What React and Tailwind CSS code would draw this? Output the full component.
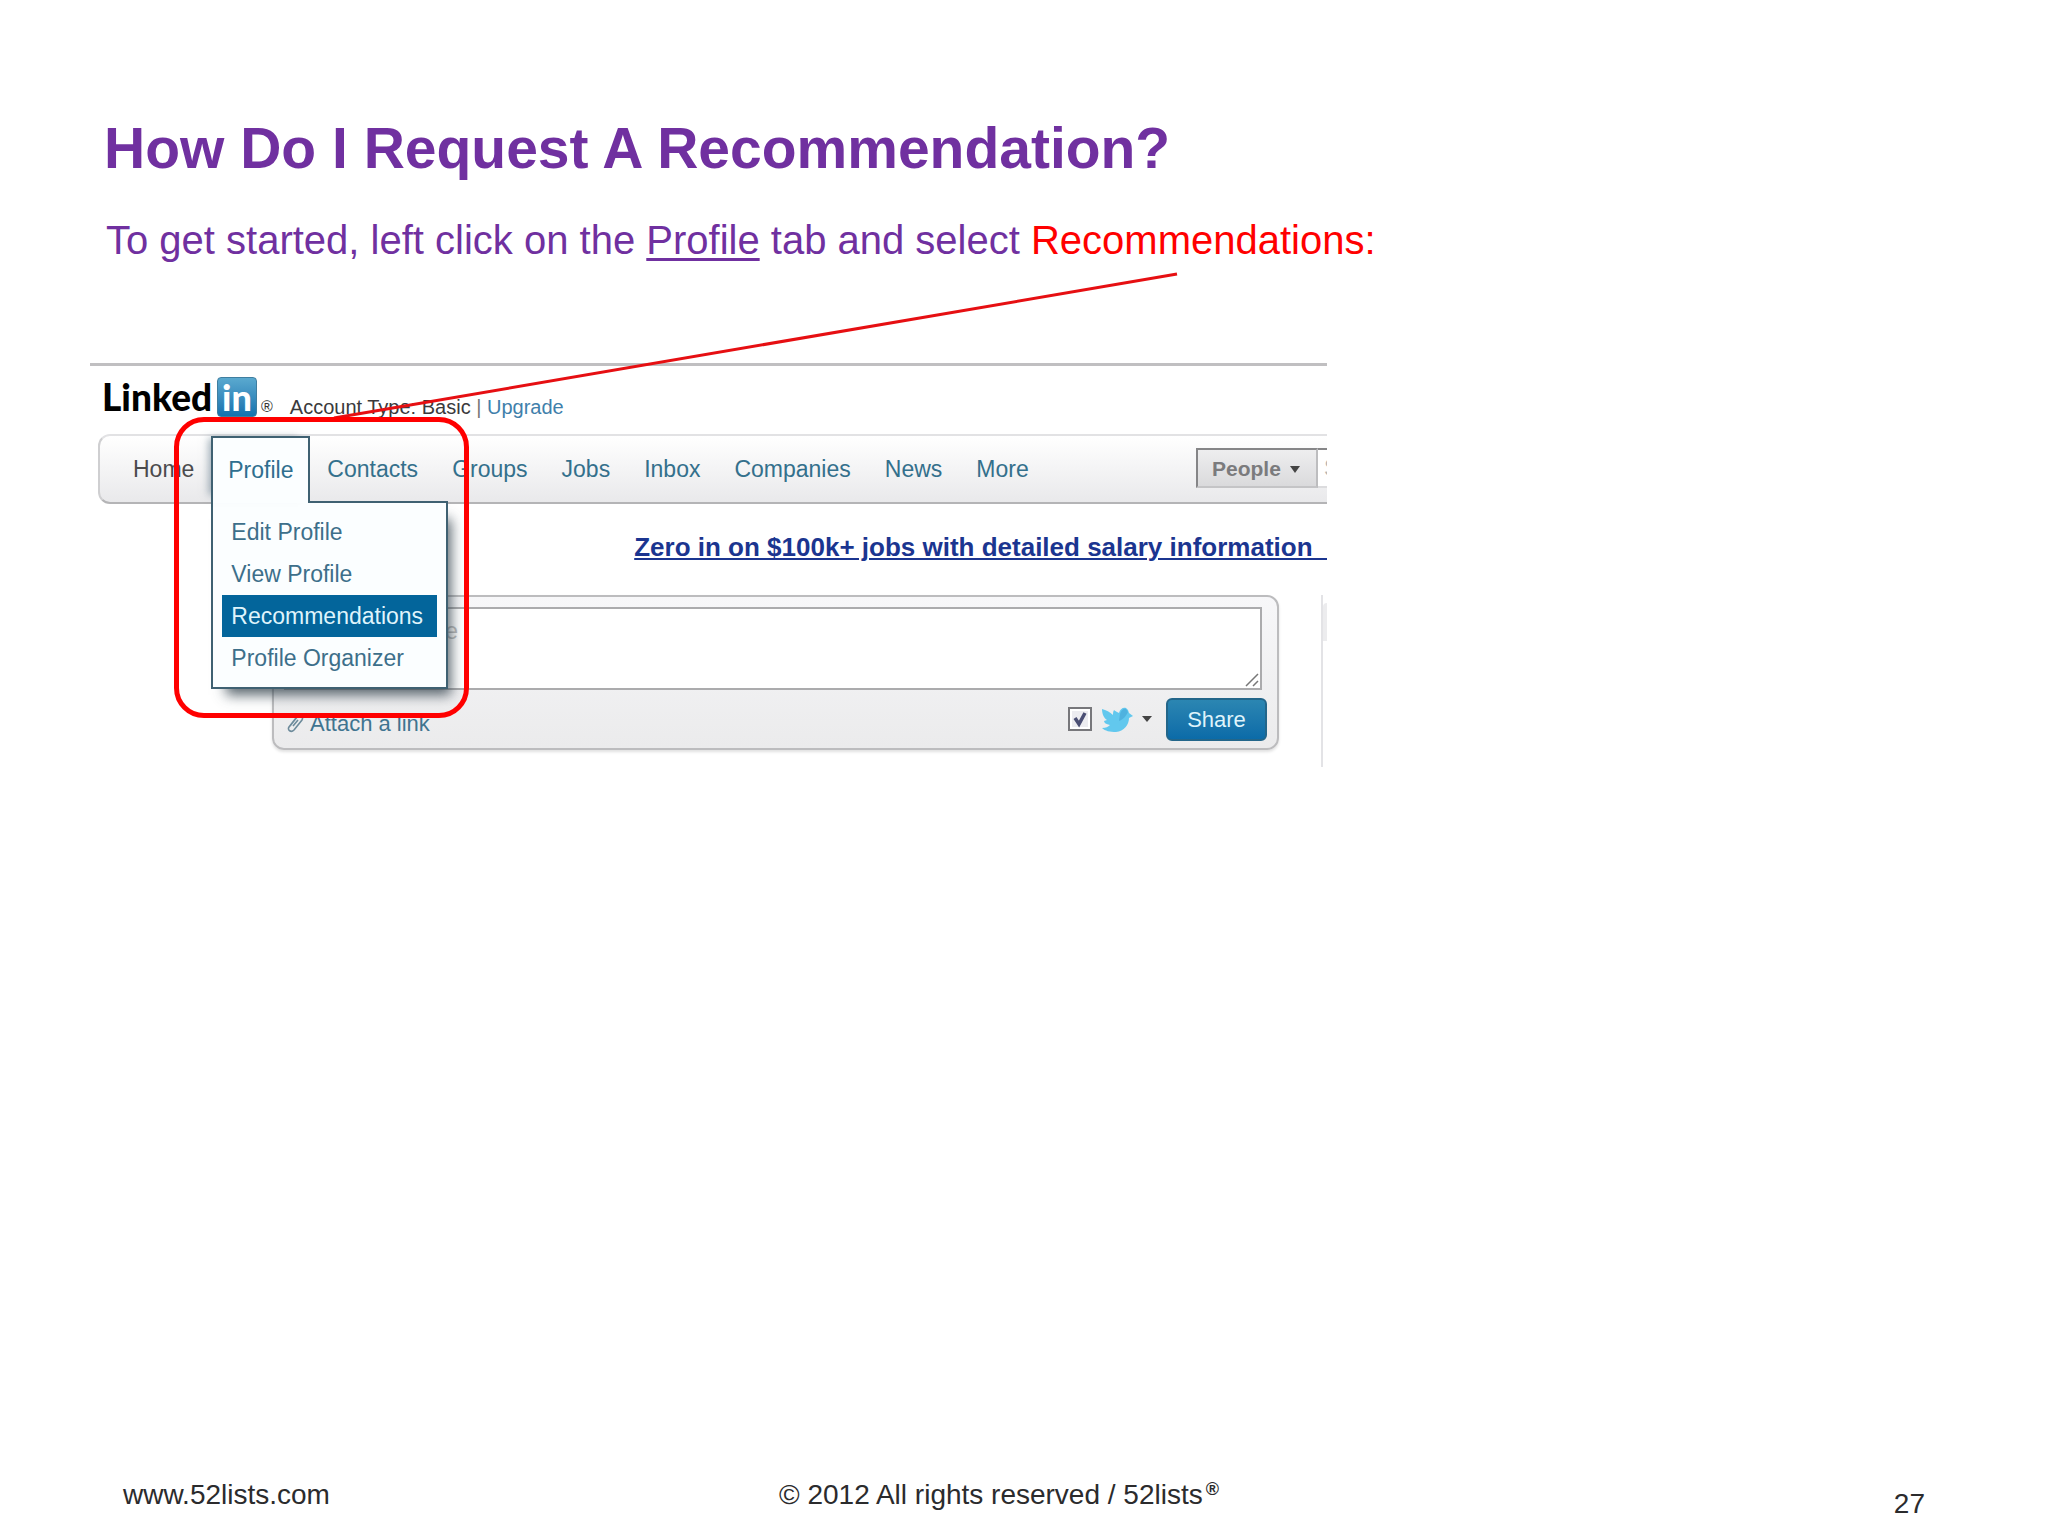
import React from "react";

const navItems = ["Contacts", "Groups", "Jobs", "Inbox", "Companies", "News", "More"];
const menuItems = ["Edit Profile", "View Profile", "Recommendations", "Profile Organizer"];

function Logo() {
  return (
    <a href="#home" aria-label="LinkedIn" className="flex items-end text-black">
      <span className="w-[115px] font-['Lato',sans-serif] text-[37px] leading-10 font-black">Linked</span>
      <span className="flex h-10 w-10 items-center justify-center rounded-sm border border-[#3f7ea0] bg-linear-to-b from-[#5aa9cf] to-[#1272ae] font-['Lato',sans-serif] text-[36px] leading-8 font-black text-white">
        in
      </span>
    </a>
  );
}

function ProfileTab() {
  return (
    <div className="relative z-20 h-[67px] w-[99px]">
      <button
        type="button"
        aria-expanded="true"
        className="relative z-20 h-[67px] w-[99px] border-2 border-b-0 border-[#3f6172] bg-[#fbfeff] text-[#2f6f8f] shadow-[-7px_-3px_8px_-5px_rgba(60,90,110,0.5)]"
      >
        Profile
      </button>
      <ul className="absolute top-[65px] left-0 z-10 w-[237px] border-2 border-[#3f6172] bg-[#fbfeff] px-[9px] py-2 shadow-[9px_12px_12px_-6px_rgba(50,65,75,0.8)]">
        {menuItems.map((item) => (
          <li key={item}>
            <a
              href="#menu"
              className={
                item === "Recommendations"
                  ? "block bg-[#03659b] px-[9px] leading-[42px] text-[#dff4fc]"
                  : "block px-[9px] leading-[42px] text-[#3d6f8a]"
              }
            >
              {item}
            </a>
          </li>
        ))}
      </ul>
    </div>
  );
}

function NavBar() {
  return (
    <nav className="ml-2 flex h-[70px] items-start rounded-l-xl border-y-2 border-l-2 border-t-[#e2e2e4] border-b-[#b4b4b6] border-l-[#cfcfd1] bg-linear-to-b from-white to-[#e9e9eb]">
      <a href="#home" className="pr-[17px] pl-[33px] leading-[66px] text-[#4b4b4d]">Home</a>
      <ProfileTab />
      <div className="flex gap-[34px] pl-[17px]">
        {navItems.map((item) => (
          <a key={item} href="#nav" className="leading-[66px] text-[#34708c]">{item}</a>
        ))}
      </div>
      <div className="mt-3 ml-auto flex h-10">
        <button
          type="button"
          className="flex w-[122px] items-center justify-between border-2 border-t-[#858587] border-r-[#bdbdbf] border-b-[#c4c4c6] border-l-[#858587] bg-linear-to-b from-[#eeeeef] to-[#dadadc] pt-[2px] pr-4 pl-[14px] text-[21px] font-bold text-[#7b7b7d]"
        >
          People
          <svg aria-hidden="true" viewBox="0 0 10 7" className="h-[7px] w-[10px]"><path d="M0 0h10L5 7z" fill="#444" /></svg>
        </button>
        <input aria-label="Search" placeholder="S" className="w-[9px] border-y-2 border-t-[#858587] border-b-[#dcdcde] bg-white pl-[6px] placeholder:text-[#b5b5b5]" />
      </div>
    </nav>
  );
}

function Bird() {
  return (
    <svg aria-hidden="true" viewBox="0 0 34 28" className="h-7 w-[34px]">
      <path
        d="M2 4c4 1 8 3 11 6 0-2 0-3 1-5 1 1 3 2 5 3 1-4 4-6 7-5l2 2 1 3 4 3-4 2c0 7-5 13-13 14-6 0-11-1-14-4 4 0 6-1 8-3-4-1-6-2-6-4l3-1C4 13 2 9 2 4z"
        fill="#62c8ee"
      />
      <path d="M20 9c1-4 4-6 6-5l2 3c-2 4-4 7-9 9z" fill="#4fb2df" />
    </svg>
  );
}

function ShareBox() {
  return (
    <div className="mr-[48px] ml-[182px] rounded-xl border-2 border-[#bcbcbe] bg-linear-to-b from-[#f7f7f9] to-[#ebebec] px-[10px] pt-[10px] shadow-[0_2px_3px_rgba(0,0,0,0.12)]">
      <div className="relative mr-[5px]">
        <textarea
          aria-label="Share an update"
          placeholder="Share an update"
          className="block h-[83px] w-full resize-none border-2 border-[#ababad] bg-white px-[2px] py-2 leading-7 placeholder:text-[#bdbdbd]"
        />
        <svg aria-hidden="true" viewBox="0 0 14 14" className="absolute right-[3px] bottom-[3px] h-[14px] w-[14px]">
          <path d="M1 13L13 1M8 13l5-5" stroke="#777" strokeWidth="1.5" />
        </svg>
      </div>
      <div className="flex h-[58px] items-center">
        <a href="#attach" className="flex items-center gap-[6px] pt-2 pl-[2px] text-[22px] text-[#3f7490]">
          <svg aria-hidden="true" viewBox="0 0 18 20" className="h-5 w-[18px]" fill="none" stroke="#6d8b9b" strokeWidth="1.6">
            <path d="M4 13l7-9c2-3 7-1 5 3l-8 10c-3 3-7 0-5-3l7-9M7 13l5-6" />
          </svg>
          Attach a link
        </a>
        <label className="ml-auto flex items-center gap-2">
          <span className="relative block h-6 w-6">
            <input
              type="checkbox"
              defaultChecked
              aria-label="Share on Twitter"
              className="block h-6 w-6 appearance-none border-2 border-[#77777b] bg-[#ececf0] shadow-[inset_0_0_0_2px_#ffffff]"
            />
            <svg aria-hidden="true" viewBox="0 0 24 24" className="pointer-events-none absolute inset-0 h-6 w-6">
              <path d="M7 11l4 6 6-11" fill="none" stroke="#4b4f74" strokeWidth="3.5" />
            </svg>
          </span>
          <Bird />
        </label>
        <svg aria-hidden="true" viewBox="0 0 10 6" className="ml-2 h-[6px] w-[10px]"><path d="M0 0h10L5 6z" fill="#444" /></svg>
        <button type="button" className="ml-[14px] h-[43px] w-[101px] rounded-md border-2 border-[#23668a] bg-linear-to-b from-[#2b86b2] to-[#0b6ba8] text-[22px] text-[#dff3fb]">
          Share
        </button>
      </div>
    </div>
  );
}

function SitePanel() {
  return (
    <section className="w-full max-w-[1237px] overflow-hidden border-t-[3px] border-[#c0bfc1] pt-[11px] text-[23px]">
      <header className="flex h-[57px] items-start pl-3">
        <Logo />
        <span className="pt-[18px] pl-1 text-[16px] leading-6 text-[#333]">®</span>
        <p className="pt-4 pl-[17px] text-[20px] leading-7 text-[#3a3a3c]">
          Account Type: Basic <span className="text-[#777]">|</span>{" "}
          <a href="#upgrade" className="text-[#3f80ab]">Upgrade</a>
        </p>
      </header>
      <NavBar />
      <p className="flex h-[91px] justify-end pt-[27px] text-[26px] leading-8 font-bold">
        <a href="#jobs" className="whitespace-pre text-[#1b3590] underline decoration-2 underline-offset-2">
          {"Zero in on $100k+ jobs with detailed salary information\u00a0\u00a0"}
        </a>
      </p>
      <div className="flex">
        <div className="flex-1"><ShareBox /></div>
        <div className="-ml-[6px] h-[172px] w-[6px] border-l-2 border-[#e3e3e6]">
          <div className="mt-2 h-[38px] rounded-tl-md bg-[#ececee]" />
        </div>
      </div>
    </section>
  );
}

export default function App() {
  return (
    <main className="flex min-h-screen flex-col bg-white px-[90px] pt-[112px] font-['Liberation_Sans',Arial,sans-serif]">
      <h1 className="pl-[14px] text-[57px] leading-[72px] font-bold text-[#7030a0]">
        How Do I Request A Recommendation?
      </h1>
      <p className="pt-8 pl-4 text-[40px] leading-[48px] text-[#7030a0]">
        To get started, left click on the <span className="underline decoration-[3px] underline-offset-4">Profile</span> tab and select{" "}
        <span className="text-[#ff0000]">Recommendations:</span>
      </p>
      <div className="relative mt-[99px]">
        <SitePanel />
        <svg aria-hidden="true" viewBox="0 0 1100 360" className="pointer-events-none absolute -top-[92px] left-0 z-30 h-[360px] w-[1100px] overflow-visible">
          <path d="M1087 3L244 147" stroke="#e60f12" strokeWidth="3" />
        </svg>
        <div className="pointer-events-none absolute top-[54px] left-[84px] z-30 h-[301px] w-[295px] rounded-[30px] border-[5px] border-[#ff0000]" />
      </div>
      <footer className="mt-auto grid grid-cols-[656px_1fr_auto] items-start pr-[33px] pb-4 pl-[33px] text-[28px] leading-8 text-[#2b2b2d]">
        <a href="#site">www.52lists.com</a>
        <p>© 2012 All rights reserved / 52lists<sup className="pl-[3px] text-[18px] font-bold">®</sup></p>
        <p className="pt-[9px]">27</p>
      </footer>
    </main>
  );
}
